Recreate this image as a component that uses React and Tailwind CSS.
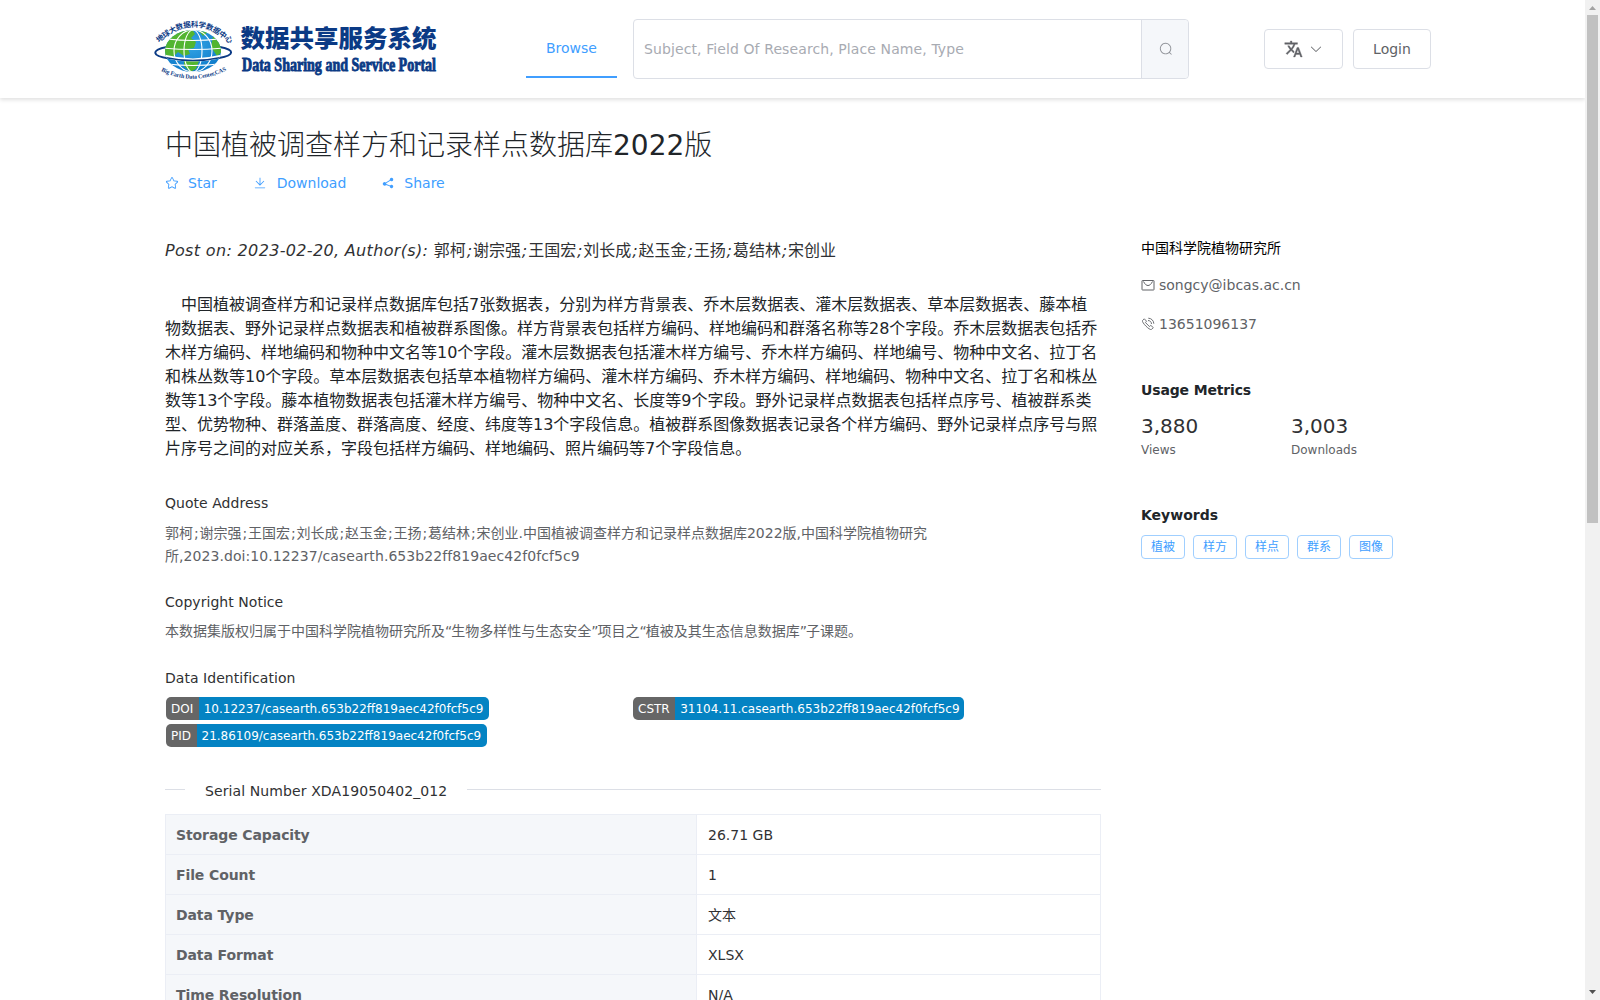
import { Fragment } from 'react';

const authors = ['郭柯', '谢宗强', '王国宏', '刘长成', '赵玉金', '王扬', '葛结林', '宋创业'];

const tags = ['植被', '样方', '样点', '群系', '图像'];

const rows = [
  ['Storage Capacity', '26.71 GB'],
  ['File Count', '1'],
  ['Data Type', '文本'],
  ['Data Format', 'XLSX'],
  ['Time Resolution', 'N/A'],
];

const description =
  '中国植被调查样方和记录样点数据库包括7张数据表，分别为样方背景表、乔木层数据表、灌木层数据表、草本层数据表、藤本植物数据表、野外记录样点数据表和植被群系图像。样方背景表包括样方编码、样地编码和群落名称等28个字段。乔木层数据表包括乔木样方编码、样地编码和物种中文名等10个字段。灌木层数据表包括灌木样方编号、乔木样方编码、样地编号、物种中文名、拉丁名和株丛数等10个字段。草本层数据表包括草本植物样方编码、灌木样方编码、乔木样方编码、样地编码、物种中文名、拉丁名和株丛数等13个字段。藤本植物数据表包括灌木样方编号、物种中文名、长度等9个字段。野外记录样点数据表包括样点序号、植被群系类型、优势物种、群落盖度、群落高度、经度、纬度等13个字段信息。植被群系图像数据表记录各个样方编码、野外记录样点序号与照片序号之间的对应关系，字段包括样方编码、样地编码、照片编码等7个字段信息。';

function ElIcon({ d, className }) {
  return (
    <svg viewBox="0 0 1024 1024" className={className} fill="currentColor">
      <path d={d} />
    </svg>
  );
}

const icons = {
  search: 'm795.904 750.72 124.992 124.928a32 32 0 0 1-45.248 45.248L750.656 795.904a416 416 0 1 1 45.248-45.248zM480 832a352 352 0 1 0 0-704 352 352 0 0 0 0 704z',
  arrowDown: 'M831.872 340.864 512 652.672 192.128 340.864a30.592 30.592 0 0 0-42.752 0 29.12 29.12 0 0 0 0 41.6L489.664 714.24a32 32 0 0 0 44.672 0l340.288-331.712a29.12 29.12 0 0 0 0-41.728 30.592 30.592 0 0 0-42.752 0z',
  star: 'm512 747.84 228.16 119.936a6.4 6.4 0 0 0 9.28-6.72l-43.52-254.08 184.512-179.904a6.4 6.4 0 0 0-3.52-10.88l-255.104-37.12L517.76 147.904a6.4 6.4 0 0 0-11.52 0L392.192 379.072l-255.104 37.12a6.4 6.4 0 0 0-3.52 10.88L318.08 606.976l-43.584 254.08a6.4 6.4 0 0 0 9.28 6.72L512 747.84zM313.6 924.48a70.4 70.4 0 0 1-102.144-74.24l37.888-220.928L88.96 472.96A70.4 70.4 0 0 1 128 352.896l221.76-32.256 99.2-200.96a70.4 70.4 0 0 1 126.208 0l99.2 200.96 221.824 32.256a70.4 70.4 0 0 1 39.04 120.064L774.72 629.376l37.888 220.928a70.4 70.4 0 0 1-102.144 74.24L512 820.096l-198.4 104.32z',
  download: 'M160 832h704a32 32 0 1 1 0 64H160a32 32 0 1 1 0-64zm384-253.696 236.288-236.352 45.248 45.248L508.8 704 192 387.2l45.248-45.248L480 584.704V128h64v450.304z',
  share: 'm679.872 348.8-301.76 188.608a127.808 127.808 0 0 1 5.12 52.16l279.936 104.96a128 128 0 1 1-22.464 59.904l-279.872-104.96a128 128 0 1 1-16.64-166.272l301.696-188.608a128 128 0 1 1 33.92 54.272z',
};

function GlobeLogo() {
  return (
    <svg viewBox="0 0 80 66" className="w-20 h-[66px] shrink-0 overflow-visible">
      <defs>
        <radialGradient id="sea" cx="45%" cy="35%" r="70%">
          <stop offset="0%" stopColor="#35a6e6" />
          <stop offset="100%" stopColor="#0b78c8" />
        </radialGradient>
        <clipPath id="globe"><ellipse cx="40" cy="33" rx="28" ry="21" /></clipPath>
        <path id="arcTop" d="M6 25 Q40 -7 76 25" />
        <path id="arcBottom" d="M8 53 Q40 69 74 52" />
      </defs>
      <path d="M14 29 C-2 32 -2 38 16 40.500 C30 42.500 52 42.500 66 40 C82 37 82 32 67 29" fill="none" stroke="#0b3a85" strokeWidth="2" />
      <ellipse cx="40" cy="33" rx="28" ry="21" fill="url(#sea)" />
      <g clipPath="url(#globe)">
        <path d="M12 39 L12 21 L26 11 L39 11 L42 16 L38 20 L43 24 L41 30 L35 31 L37 36 L31 38 L25 34 L20 39Z" fill="#52b531" />
        <path d="M46 13 L55 14 L50 18Z M60 18 L67 24 L70 33 L64 38 L58 29Z" fill="#52b531" />
        <path d="M31 43 L46 43 L43 51 L37 54 L31 48Z" fill="#52b531" />
        <g fill="none" stroke="#fff" strokeWidth="1.100">
          <ellipse cx="40" cy="33" rx="9" ry="21" />
          <ellipse cx="40" cy="33" rx="19" ry="21" />
          <path d="M10 30Q40 33 70 30M14 21Q40 24 66 21M14 46Q40 49 66 46" />
        </g>
        <path d="M10 38 Q40 46 70 38" fill="none" stroke="#fff" strokeWidth="3.200" />
        <path d="M10 39 Q40 46 70 39" fill="none" stroke="#0b3a85" strokeWidth="1.400" />
      </g>
      <text className="fill-[#0b3a85] font-['Noto_Sans_CJK_SC',sans-serif] text-[7.5px] font-bold">
        <textPath href="#arcTop" textLength="80">地球大数据科学数据中心</textPath>
      </text>
      <text className="fill-[#0b3a85] font-['Liberation_Serif',serif] text-[6px] font-bold">
        <textPath href="#arcBottom" textLength="68">Big Earth Data Center,CAS</textPath>
      </text>
    </svg>
  );
}

function Logo() {
  return (
    <a className="flex w-[285px] text-[#0b3a85]">
      <GlobeLogo />
      <svg viewBox="0 0 205 66" className="w-[205px] h-[66px] overflow-visible" fill="currentColor">
        <text x="7.500" y="29" textLength="196" lengthAdjust="spacingAndGlyphs" className="font-['Noto_Sans_CJK_SC',sans-serif] text-[24px] font-black">数据共享服务系统</text>
        <text x="9" y="53" textLength="194" lengthAdjust="spacingAndGlyphs" stroke="currentColor" strokeWidth="0.900" className="font-['Liberation_Serif',serif] text-[18px] font-bold">Data Sharing and Service Portal</text>
      </svg>
    </a>
  );
}

function Header() {
  return (
    <header className="h-[98px] pl-[153px] flex items-start bg-white shadow-[0_2px_4px_rgba(0,0,0,0.12)]">
      <div className="mt-[18px]"><Logo /></div>
      <a className="ml-[88px] mt-[18px] w-[91px] h-[60px] leading-[60px] text-center text-[#409eff] border-b-2 border-[#409eff]">Browse</a>
      <div className="ml-4 mt-[19px] flex w-[556px] h-[60px] rounded border border-[#dcdfe6]">
        <input
          className="w-[508px] px-2.5 tracking-[0.1px] outline-none border-r border-[#dcdfe6] placeholder:text-[#a8abb2]"
          placeholder="Subject, Field Of Research, Place Name, Type"
        />
        <button className="flex-1 pl-0.5 bg-[#f5f7fa] text-[#909399] flex items-center justify-center rounded-r">
          <ElIcon d={icons.search} className="size-3.5" />
        </button>
      </div>
      <button className="ml-[75px] mt-[29px] w-[79px] h-10 rounded border border-[#dcdfe6] text-[#606266] flex items-center justify-center gap-1.5">
        <svg viewBox="0 0 24 24" className="w-[19px] h-5" fill="currentColor" stroke="currentColor" strokeWidth="0.500">
          <path d="m12.870 15.070-2.540-2.510.03-.03A17.520 17.520 0 0 0 14.070 6H17V4h-7V2H8v2H1v2h11.170C11.500 7.920 10.440 9.750 9 11.350 8.070 10.320 7.300 9.190 6.690 8h-2c.73 1.630 1.730 3.170 2.980 4.560l-5.090 5.020L4 19l5-5 3.110 3.110.76-2.040zM18.500 10h-2L12 22h2l1.120-3h4.750L21 22h2l-4.500-12zm-2.620 7 1.620-4.330L19.120 17h-3.240z" />
        </svg>
        <ElIcon d={icons.arrowDown} className="size-3.5" />
      </button>
      <button className="ml-2.5 mt-[29px] w-[78px] h-10 rounded border border-[#dcdfe6] text-[#606266]">Login</button>
    </header>
  );
}

function Badge({ label, value, className }) {
  return (
    <div className={`flex h-[23px] leading-6 text-xs text-white rounded-[5px] overflow-hidden ${className}`}>
      <span className="bg-[#666] pl-[5px] pr-[5.5px]">{label}</span>
      <span className="bg-[#0483c3] flex-1 pl-[5px]">{value}</span>
    </div>
  );
}

function Section({ title, className, children }) {
  return (
    <section className={className}>
      <h4 className="leading-6 tracking-[0.04px] text-[#303133]">{title}</h4>
      {children}
    </section>
  );
}

function AuthorList({ nameClass }) {
  return authors.map((name, i) => (
    <Fragment key={name}>
      {i > 0 && <span className="px-[0.9px]">;</span>}
      <span className={nameClass}>{name}</span>
    </Fragment>
  ));
}

// curly quotes sit tight against the Chinese text
function Quoted({ children }) {
  return (
    <>
      <span className="tracking-[-1px]">“</span>{children}<span className="tracking-[-1px]">”</span>
    </>
  );
}

function Sidebar() {
  return (
    <aside className="w-[300px] ml-10 pt-[11px]">
      <p className="leading-5 text-black">中国科学院植物研究所</p>
      <p className="mt-[17px] h-5 flex items-center gap-1 text-[#606266]">
        <svg viewBox="0 0 14 14" className="size-3.5" fill="none" stroke="currentColor">
          <rect x="1" y="2.500" width="12" height="9.500" rx="0.500" />
          <path d="M2.500 3.500C4 6.500 5.500 7.500 7 7.500s3-1 4.500-4" />
        </svg>
        songcy@ibcas.ac.cn
      </p>
      <p className="mt-[19px] h-5 flex items-center gap-1 text-[#606266]">
        <svg viewBox="0 0 14 14" className="size-3.5" fill="none" stroke="currentColor" strokeWidth="0.900">
          <path d="M3.300 1.800 1.500 3.600C.6 5.500 8.500 13.400 10.400 12.500l1.900-1.900-2.500-2.200-1.400 1.100L4.500 5.600l1-1.400zM7 3.500c2 0 3.500 1.500 3.500 3.500M7.300 1.200c3 0 5.500 2.500 5.500 5.500" />
        </svg>
        13651096137
      </p>
      <h4 className="mt-[46px] leading-5 font-bold tracking-[-0.15px] text-[#212529]">Usage Metrics</h4>
      <div className="mt-3 flex">
        {[['3,880', 'Views'], ['3,003', 'Downloads']].map(([count, label]) => (
          <div key={label} className="w-[150px]">
            <p className="text-xl leading-[28px] text-[#303133]">{count}</p>
            <p className="mt-px text-xs leading-[18px] text-[#606266]">{label}</p>
          </div>
        ))}
      </div>
      <h4 className="mt-[46px] leading-5 font-bold text-[#212529]">Keywords</h4>
      <div className="mt-2.5 flex gap-2">
        {tags.map(tag => (
          <span key={tag} className="w-11 h-6 leading-[22px] text-center text-xs text-[#409eff] border border-[#a0cfff] rounded">{tag}</span>
        ))}
      </div>
    </aside>
  );
}

// always-visible page scrollbar
function ScrollBar() {
  return (
    <div className="w-[15px] h-full shrink-0 bg-[#f1f1f1] flex flex-col items-center justify-between">
      <div className="flex flex-col items-center">
        <svg viewBox="0 0 15 15" className="size-[15px]"><path d="M4 10h7L7.500 6z" fill="#a3a3a3" /></svg>
        <div className="w-[11px] h-[508px] bg-[#c1c1c1]" />
      </div>
      <svg viewBox="0 0 15 15" className="size-[15px]"><path d="M4 5h7L7.500 9z" fill="#505050" /></svg>
    </div>
  );
}

export default function App() {
  return (
    <div className="flex w-full h-screen overflow-hidden bg-white text-sm text-[#303133] font-['DejaVu_Sans','Noto_Sans_CJK_SC',sans-serif]">
      <div className="flex-1 h-full overflow-hidden">
        <Header />
        <div className="pl-[165px]">
          <h1 className="mt-7 text-[28px] leading-10 text-[#212529]">
            <span className="font-light">中国植被调查样方和记录样点数据库</span>2022<span className="font-light">版</span>
          </h1>
          <div className="mt-[7px] h-5 flex items-center text-[#409eff]">
            <ElIcon d={icons.star} className="size-3.5 mr-[9px]" />Star
            <ElIcon d={icons.download} className="size-3.5 ml-9 mr-2.5" />Download
            <ElIcon d={icons.share} className="size-3.5 ml-[35px] mr-[9px]" />Share
          </div>
          <main className="mt-[34px] flex">
            <div className="w-[936px]">
              <p className="mt-3 leading-6 text-base italic text-[#303133]">
                <span className="tracking-[0.34px]">Post on: 2023-02-20, Author(s): </span>
                <AuthorList nameClass="not-italic" />
              </p>
              <p className="mt-[30px] w-[934px] indent-4 leading-6 text-base text-[#212529]">{description}</p>
              <Section title="Quote Address" className="mt-[30px]">
                <p className="mt-[7px] w-[800px] leading-[23px] text-[#606266]">
                  <AuthorList />
                  .中国植被调查样方和记录样点数据库2022版,中国科学院植物研究所<span className="tracking-[0.07px]">,2023.doi:10.12237/casearth.653b22ff819aec42f0fcf5c9</span>
                </p>
              </Section>
              <Section title="Copyright Notice" className="mt-[22px]">
                <p className="mt-1.5 leading-[23px] text-[#606266]">
                  本数据集版权归属于中国科学院植物研究所及<Quoted>生物多样性与生态安全</Quoted>项目之<Quoted>植被及其生态信息数据库</Quoted>子课题。
                </p>
              </Section>
              <Section title="Data Identification" className="mt-[23px]">
                <div className="mt-[7px] pl-px flex flex-wrap gap-y-1">
                  <div className="w-[467px]"><Badge label="DOI" value="10.12237/casearth.653b22ff819aec42f0fcf5c9" className="w-[323px]" /></div>
                  <Badge label="CSTR" value="31104.11.casearth.653b22ff819aec42f0fcf5c9" className="w-[331px]" />
                  <Badge label="PID" value="21.86109/casearth.653b22ff819aec42f0fcf5c9" className="w-[321px]" />
                </div>
              </Section>
              <div className="mt-[30px] h-6 flex items-center">
                <span className="w-5 h-px bg-[#dcdfe6]" />
                <span className="px-5 pt-1 tracking-[0.1px]">Serial Number XDA19050402_012</span>
                <span className="flex-1 h-px bg-[#dcdfe6]" />
              </div>
              <table className="mt-[13px] w-full table-fixed border-collapse">
                <tbody>
                  {rows.map(([name, value]) => (
                    <tr key={name} className="h-10">
                      <th className="w-[531px] pl-2.5 pr-3 text-left font-bold tracking-[-0.1px] text-[#606266] bg-[#f5f7fa] border border-[#ebeef5]">{name}</th>
                      <td className="px-[11px] border border-[#ebeef5]">{value}</td>
                    </tr>
                  ))}
                </tbody>
              </table>
            </div>
            <Sidebar />
          </main>
        </div>
      </div>
      <ScrollBar />
    </div>
  );
}
